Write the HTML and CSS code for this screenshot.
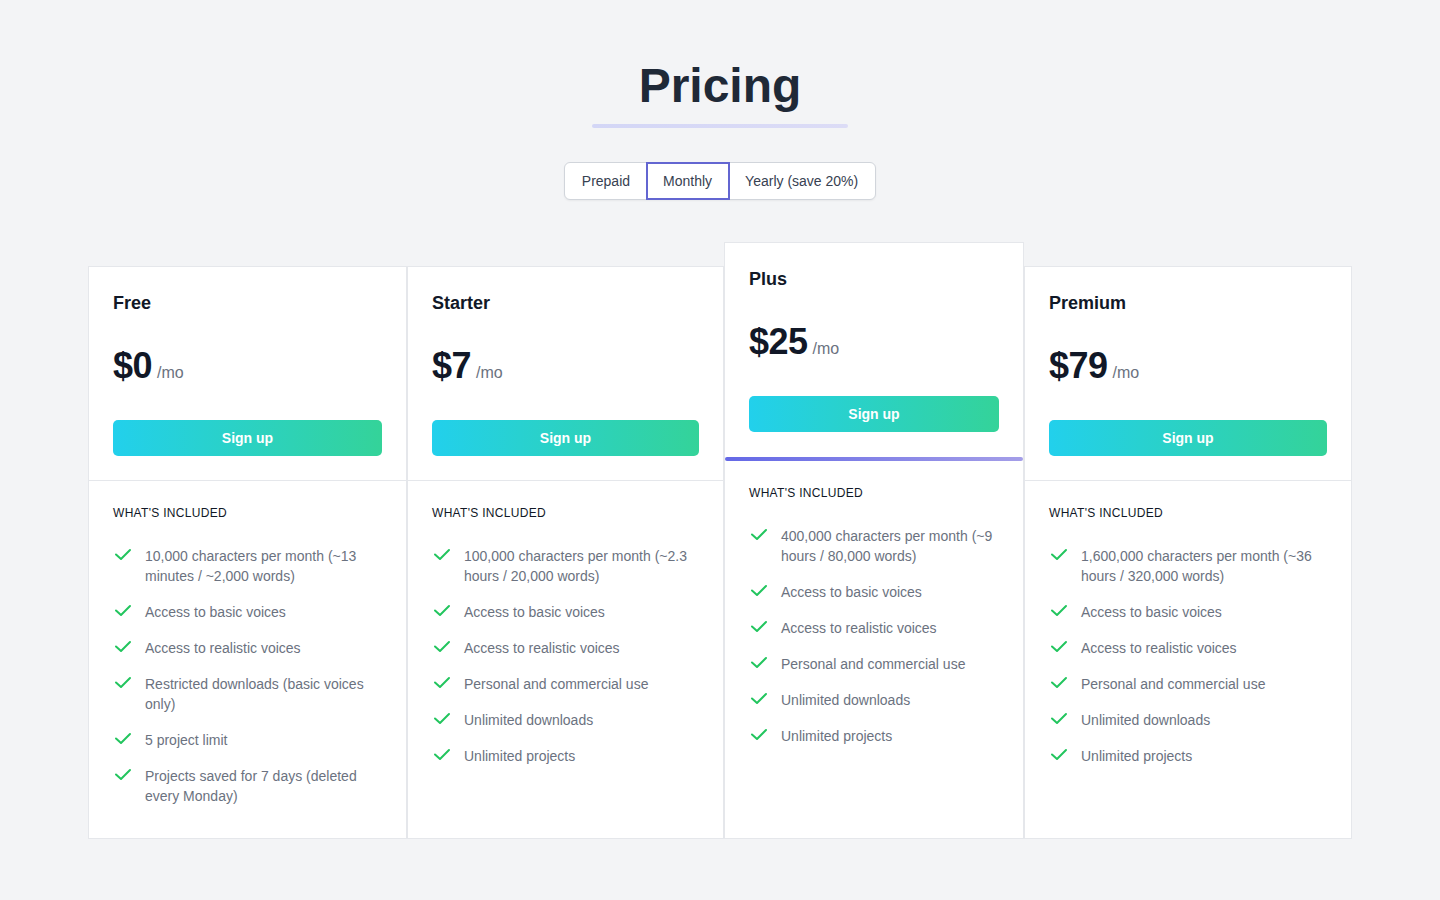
FILE: index.html
```html
<!DOCTYPE html>
<html lang="en">
<head>
<meta charset="utf-8">
<title>Pricing</title>
<link rel="stylesheet" href="styles.css">
</head>
<body>
<main class="page">
  <header class="intro">
    <h1 class="title">Pricing</h1>
    <div class="title-bar"></div>
    <div class="toggle">
      <button class="toggle-btn">Prepaid</button>
      <button class="toggle-btn is-active">Monthly</button>
      <button class="toggle-btn">Yearly (save 20%)</button>
    </div>
  </header>

  <section class="plans">
    <article class="plan plan-free">
      <div class="plan-head">
        <h2 class="plan-name">Free</h2>
        <p class="plan-price"><span class="amount">$0</span><span class="per">/mo</span></p>
        <button class="signup">Sign up</button>
      </div>
      <div class="plan-body">
        <h3 class="included">What's included</h3>
        <ul class="features">
          <li><svg class="check" viewBox="0 0 20 20"><path d="M3 8.5l5 4.5 9-9"/></svg><span>10,000 characters per month (~13 minutes / ~2,000 words)</span></li>
          <li><svg class="check" viewBox="0 0 20 20"><path d="M3 8.5l5 4.5 9-9"/></svg><span>Access to basic voices</span></li>
          <li><svg class="check" viewBox="0 0 20 20"><path d="M3 8.5l5 4.5 9-9"/></svg><span>Access to realistic voices</span></li>
          <li><svg class="check" viewBox="0 0 20 20"><path d="M3 8.5l5 4.5 9-9"/></svg><span>Restricted downloads (basic voices only)</span></li>
          <li><svg class="check" viewBox="0 0 20 20"><path d="M3 8.5l5 4.5 9-9"/></svg><span>5 project limit</span></li>
          <li><svg class="check" viewBox="0 0 20 20"><path d="M3 8.5l5 4.5 9-9"/></svg><span>Projects saved for 7 days (deleted every Monday)</span></li>
        </ul>
      </div>
    </article>

    <article class="plan plan-starter">
      <div class="plan-head">
        <h2 class="plan-name">Starter</h2>
        <p class="plan-price"><span class="amount">$7</span><span class="per">/mo</span></p>
        <button class="signup">Sign up</button>
      </div>
      <div class="plan-body">
        <h3 class="included">What's included</h3>
        <ul class="features">
          <li><svg class="check" viewBox="0 0 20 20"><path d="M3 8.5l5 4.5 9-9"/></svg><span>100,000 characters per month (~2.3 hours / 20,000 words)</span></li>
          <li><svg class="check" viewBox="0 0 20 20"><path d="M3 8.5l5 4.5 9-9"/></svg><span>Access to basic voices</span></li>
          <li><svg class="check" viewBox="0 0 20 20"><path d="M3 8.5l5 4.5 9-9"/></svg><span>Access to realistic voices</span></li>
          <li><svg class="check" viewBox="0 0 20 20"><path d="M3 8.5l5 4.5 9-9"/></svg><span>Personal and commercial use</span></li>
          <li><svg class="check" viewBox="0 0 20 20"><path d="M3 8.5l5 4.5 9-9"/></svg><span>Unlimited downloads</span></li>
          <li><svg class="check" viewBox="0 0 20 20"><path d="M3 8.5l5 4.5 9-9"/></svg><span>Unlimited projects</span></li>
        </ul>
      </div>
    </article>

    <article class="plan plan-plus">
      <div class="plan-head">
        <h2 class="plan-name">Plus</h2>
        <p class="plan-price"><span class="amount">$25</span><span class="per">/mo</span></p>
        <button class="signup">Sign up</button>
      </div>
      <div class="plan-body">
        <h3 class="included">What's included</h3>
        <ul class="features">
          <li><svg class="check" viewBox="0 0 20 20"><path d="M3 8.5l5 4.5 9-9"/></svg><span>400,000 characters per month (~9 hours / 80,000 words)</span></li>
          <li><svg class="check" viewBox="0 0 20 20"><path d="M3 8.5l5 4.5 9-9"/></svg><span>Access to basic voices</span></li>
          <li><svg class="check" viewBox="0 0 20 20"><path d="M3 8.5l5 4.5 9-9"/></svg><span>Access to realistic voices</span></li>
          <li><svg class="check" viewBox="0 0 20 20"><path d="M3 8.5l5 4.5 9-9"/></svg><span>Personal and commercial use</span></li>
          <li><svg class="check" viewBox="0 0 20 20"><path d="M3 8.5l5 4.5 9-9"/></svg><span>Unlimited downloads</span></li>
          <li><svg class="check" viewBox="0 0 20 20"><path d="M3 8.5l5 4.5 9-9"/></svg><span>Unlimited projects</span></li>
        </ul>
      </div>
    </article>

    <article class="plan plan-premium">
      <div class="plan-head">
        <h2 class="plan-name">Premium</h2>
        <p class="plan-price"><span class="amount">$79</span><span class="per">/mo</span></p>
        <button class="signup">Sign up</button>
      </div>
      <div class="plan-body">
        <h3 class="included">What's included</h3>
        <ul class="features">
          <li><svg class="check" viewBox="0 0 20 20"><path d="M3 8.5l5 4.5 9-9"/></svg><span>1,600,000 characters per month (~36 hours / 320,000 words)</span></li>
          <li><svg class="check" viewBox="0 0 20 20"><path d="M3 8.5l5 4.5 9-9"/></svg><span>Access to basic voices</span></li>
          <li><svg class="check" viewBox="0 0 20 20"><path d="M3 8.5l5 4.5 9-9"/></svg><span>Access to realistic voices</span></li>
          <li><svg class="check" viewBox="0 0 20 20"><path d="M3 8.5l5 4.5 9-9"/></svg><span>Personal and commercial use</span></li>
          <li><svg class="check" viewBox="0 0 20 20"><path d="M3 8.5l5 4.5 9-9"/></svg><span>Unlimited downloads</span></li>
          <li><svg class="check" viewBox="0 0 20 20"><path d="M3 8.5l5 4.5 9-9"/></svg><span>Unlimited projects</span></li>
        </ul>
      </div>
    </article>
  </section>
</main>
</body>
</html>
```

FILE: styles.css
```css
* {
  box-sizing: border-box;
}

html, body {
  margin: 0;
  padding: 0;
  background: #f3f4f6;
}

body {
  font-family: "Liberation Sans", Arial, sans-serif;
  color: #111827;
  min-height: 900px;
}

.page {
  width: 1264px;
  margin: 0 auto;
  padding-top: 62px;
}

.intro {
  display: flex;
  flex-direction: column;
  align-items: center;
}

.title {
  margin: 0;
  font-size: 48px;
  line-height: 48px;
  font-weight: 700;
  color: #1f2937;
}

.title-bar {
  margin-top: 14px;
  width: 256px;
  height: 4px;
  border-radius: 2px;
  background: linear-gradient(to right, #d3d6f6, #dcdcf6);
}

.toggle {
  margin-top: 34px;
  display: flex;
  background: #ffffff;
  border: 1px solid #d1d5db;
  border-radius: 6px;
  box-shadow: 0 1px 2px rgba(0, 0, 0, 0.05);
}

.toggle-btn {
  font-family: inherit;
  font-size: 14px;
  line-height: 20px;
  color: #374151;
  background: transparent;
  border: 0;
  padding: 8px 16.5px;
  height: 36px;
  cursor: pointer;
}

.toggle-btn.is-active {
  outline: 2px solid #6366d1;
  outline-offset: -1px;
  position: relative;
}

.plans {
  margin-top: 66px;
  display: grid;
  grid-template-columns: 319px 317px 300px 328px;
  align-items: stretch;
}

.plan {
  background: #ffffff;
  border: 1px solid #e5e7eb;
  display: flex;
  flex-direction: column;
}

.plan-plus {
  margin-top: -24px;
}

.plan-head {
  padding: 24px 24px 24px;
  border-bottom: 1px solid #e5e7eb;
}

.plan-plus .plan-head {
  border-bottom: 1px solid #ffffff;
}

.plan-name {
  margin: 0;
  font-size: 18px;
  line-height: 24px;
  font-weight: 700;
  color: #111827;
}

.plan-price {
  margin: 31px 0 0;
  height: 40px;
  line-height: 40px;
  display: flex;
  align-items: baseline;
}

.amount {
  font-size: 36px;
  line-height: 40px;
  font-weight: 700;
  color: #111827;
  letter-spacing: -0.5px;
}

.per {
  margin-left: 5px;
  font-size: 16px;
  line-height: 20px;
  color: #6b7280;
}

.signup {
  display: block;
  width: 100%;
  margin-top: 34px;
  height: 36px;
  border: 0;
  border-radius: 5px;
  background: linear-gradient(to right, #22d0ec, #34d399);
  color: #ffffff;
  font-family: inherit;
  font-size: 14px;
  font-weight: 700;
  line-height: 20px;
  cursor: pointer;
}

.plan-body {
  padding: 24px 24px 32px;
  flex: 1;
}

.plan-plus .plan-body {
  position: relative;
  padding-top: 28px;
}

.plan-plus .plan-body::before {
  content: "";
  position: absolute;
  left: 0;
  right: 0;
  top: 0;
  height: 4px;
  border-radius: 2px;
  background: linear-gradient(to right, #6468e6, #a49ee8);
}

.included {
  margin: 0;
  font-size: 12px;
  line-height: 16px;
  font-weight: 400;
  text-transform: uppercase;
  letter-spacing: 0.025em;
  color: #111827;
}

.features {
  list-style: none;
  margin: 25px 0 0;
  padding: 0;
  display: flex;
  flex-direction: column;
  gap: 16px;
}

.features li {
  display: flex;
  gap: 12px;
  font-size: 14px;
  line-height: 20px;
  color: #6b7280;
}

.check {
  flex: 0 0 20px;
  width: 20px;
  height: 20px;
  fill: none;
  stroke: #22c55e;
  stroke-width: 2;
  stroke-linecap: round;
  stroke-linejoin: round;
}
```
